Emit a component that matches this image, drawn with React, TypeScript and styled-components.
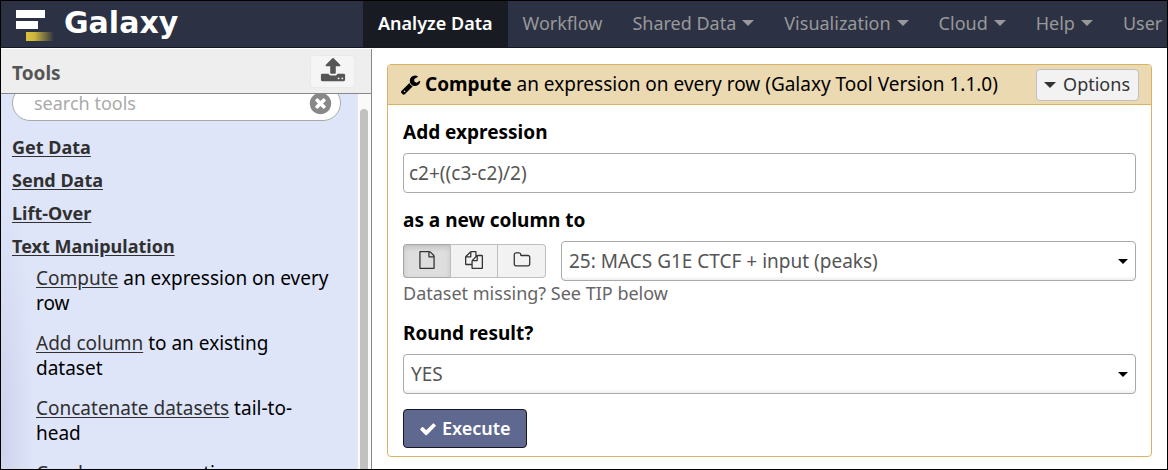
import React from "react";
import styled, { createGlobalStyle } from "styled-components";

const GlobalStyle = createGlobalStyle`
  *, *::before, *::after { box-sizing: border-box; }
  body {
    margin: 0;
    font-family: "Noto Sans", "Open Sans", sans-serif;
    font-size: 18px;
    line-height: 25px;
    color: #000;
    background: #fff;
  }
  button, input, select { font: inherit; margin: 0; }
`;

const ICONS = {
  wrench:
    "M448 1472q0-26-19-45t-45-19-45 19-19 45 19 45 45 19 45-19 19-45zm644-420l-682 682q-37 37-90 37-52 0-91-37l-106-108q-38-36-38-90 0-53 38-91l681-681q39 98 114.5 173.5t173.5 114.5zm634-435q0 39-23 106-47 134-164.5 217.5t-258.5 83.5q-185 0-316.5-131.5t-131.5-316.5 131.5-316.5 316.5-131.5q58 0 121.5 16.5t107.5 46.5q16 11 16 28t-16 28l-293 169v224l193 107q5-3 79-48.5t135.5-81 70.5-35.5q15 0 23.5 10t8.5 25z",
  check:
    "M1671 566q0 40-28 68l-724 724-136 136q-28 28-68 28t-68-28l-136-136-362-362q-28-28-28-68t28-68l136-136q28-28 68-28t68 28l294 295 656-657q28-28 68-28t68 28l136 136q28 28 28 68z",
  clear:
    "M1277 1122q0-26-19-45l-181-181 181-181q19-19 19-45 0-27-19-46l-90-90q-19-19-46-19-26 0-45 19l-181 181-181-181q-19-19-45-19-27 0-46 19l-90 90q-19 19-19 46 0 26 19 45l181 181-181 181q-19 19-19 45 0 27 19 46l90 90q19 19 46 19 26 0 45-19l181-181 181 181q19 19 45 19 27 0 46-19l90-90q19-19 19-46zm387-226q0 209-103 385.5t-279.5 279.5-385.5 103-385.5-103-279.5-279.5-103-385.5 103-385.5 279.5-279.5 385.5-103 385.5 103 279.5 279.5 103 385.5z",
  upload:
    "M1344 1472q0-26-19-45t-45-19-45 19-19 45 19 45 45 19 45-19 19-45zm256 0q0-26-19-45t-45-19-45 19-19 45 19 45 45 19 45-19 19-45zm128-224v320q0 40-28 68t-68 28h-1472q-40 0-68-28t-28-68v-320q0-40 28-68t68-28h427q21 56 70.5 92t110.5 36h256q61 0 110.5-36t70.5-92h427q40 0 68 28t28 68zm-325-648q-17 40-59 40h-256v448q0 26-19 45t-45 19h-256q-26 0-45-19t-19-45v-448h-256q-42 0-59-40-17-39 14-69l448-448q18-19 45-19t45 19l448 448q31 30 14 69z",
  file:
    "M1596 380q28 28 48 76t20 88v1152q0 40-28 68t-68 28h-1344q-40 0-68-28t-28-68v-1600q0-40 28-68t68-28h896q40 0 88 20t76 48zm-444-244v376h376q-10-29-22-41l-313-313q-12-12-41-22zm384 1528v-1024h-416q-40 0-68-28t-28-68v-416h-768v1536h1280z",
  files:
    "M1696 384q40 0 68 28t28 68v1216q0 40-28 68t-68 28h-960q-40 0-68-28t-28-68v-288h-544q-40 0-68-28t-28-68v-672q0-40 20-88t48-76l408-408q28-28 76-48t88-20h416q40 0 68 28t28 68v328q68-40 128-40h416zm-544 213l-299 299h299v-299zm-640-384l-299 299h299v-299zm196 647l316-316v-416h-384v416q0 40-28 68t-68 28h-416v640h512v-256q0-40 20-88t48-76zm956 804v-1152h-384v416q0 40-28 68t-68 28h-416v640h896z",
  folder:
    "M1600 1312v-704q0-40-28-68t-68-28h-704q-40 0-68-28t-28-68v-64q0-40-28-68t-68-28h-320q-40 0-68 28t-28 68v960q0 40 28 68t68 28h1216q40 0 68-28t28-68zm128-704v704q0 92-66 158t-158 66h-1216q-92 0-158-66t-66-158v-960q0-92 66-158t158-66h320q92 0 158 66t66 158v32h672q92 0 158 66t66 158z",
};

function Icon({ name, size }: { name: keyof typeof ICONS; size: number }) {
  return (
    <svg width={size} height={size} viewBox="0 0 1792 1792" fill="currentColor" aria-hidden="true">
      <path d={ICONS[name]} />
    </svg>
  );
}

const Page = styled.div`
  display: flex;
  flex-direction: column;
  height: 100vh;
  border: 1px solid #000;
  overflow: hidden;
`;

const Masthead = styled.header`
  display: flex;
  flex: none;
  height: 47px;
  background: #2c3143;
  border-bottom: 1px solid #151822;
  overflow: hidden;
`;

const Brand = styled.a`
  display: flex;
  flex: none;
  align-items: center;
  gap: 9px;
  width: 362px;
  padding: 0 0 2px 15px;
  color: #fff;
  font-family: "DejaVu Sans", Verdana, sans-serif;
  font-size: 30px;
  font-weight: bold;
  line-height: 44px;
  text-decoration: none;
`;

const Nav = styled.nav`
  display: flex;
  flex: none;
`;

const NavLink = styled.a<{ $active?: boolean }>`
  display: flex;
  align-items: center;
  gap: 6px;
  padding: 0 15px 2px;
  white-space: nowrap;
  text-decoration: none;
  color: ${(p) => (p.$active ? "#fff" : "#999")};
  background: ${(p) => (p.$active ? "#191b22" : "transparent")};
  font-weight: ${(p) => (p.$active ? 600 : 400)};
`;

const Caret = styled.span<{ $size?: number }>`
  flex: none;
  border: solid transparent;
  border-width: ${(p) => p.$size ?? 6}px ${(p) => p.$size ?? 6}px 0;
  border-top-color: currentColor;
`;

const Columns = styled.div`
  display: flex;
  flex: 1;
  min-height: 0;
  padding-top: 1px;
`;

const ToolPanel = styled.aside`
  display: flex;
  flex: none;
  flex-direction: column;
  width: 371px;
  border-right: 1px solid #888;
`;

const PanelHeader = styled.div`
  display: flex;
  flex: none;
  align-items: center;
  justify-content: space-between;
  height: 45px;
  padding: 0 16px 0 11px;
  background: #eee;
  border-bottom: 1px solid #888;
  color: #555;
`;

const PanelTitle = styled.h2`
  margin: 0;
  padding-top: 4px;
  font-size: 19px;
  font-weight: 700;
`;

const UploadButton = styled.button`
  display: flex;
  align-items: center;
  justify-content: center;
  width: 45px;
  height: 33px;
  padding: 0 0 2px;
  border: 1px solid #eaeaea;
  border-radius: 4px;
  background: #f5f5f5;
  color: #555;
`;

const PanelBody = styled.div`
  display: flex;
  flex: 1;
  min-height: 0;
  background:
    radial-gradient(ellipse 34px 260px at 0 90%, rgba(50, 50, 110, 0.1), transparent),
    #dfe5f9;
`;

const ToolList = styled.div`
  flex: 1;
  min-width: 0;
  padding: 0 16px 0 11px;
  overflow: hidden;
`;

const ScrollTrack = styled.div`
  flex: none;
  width: 14px;
  padding: 15px 2px 0;
  background: #fafafa;
  border-left: 1px solid #e8e8e8;
`;

const ScrollThumb = styled.div`
  width: 8px;
  height: 100%;
  border-radius: 4px 4px 0 0;
  background: #c1c1c1;
`;

const SearchBox = styled.div`
  display: flex;
  align-items: center;
  height: 36px;
  margin: -9px 0 14px;
  padding: 0 7px 0 21px;
  border: 1px solid #aaa;
  border-radius: 18px;
  background: #fff;
`;

const SearchInput = styled.input`
  flex: 1;
  min-width: 0;
  padding: 0;
  border: 0;
  outline: 0;
  background: transparent;
  &::placeholder { color: #aaa; opacity: 1; }
`;

const ClearButton = styled.button`
  display: flex;
  padding: 0;
  border: 0;
  background: none;
  color: #888;
`;

const Section = styled.section`
  margin-bottom: 8px;
`;

const SectionTitle = styled.a`
  color: #303030;
  font-weight: 700;
  text-underline-offset: 2px;
`;

const Tools = styled.ul`
  margin: 7px 0 0;
  padding: 0 8px 0 24px;
  list-style: none;
  font-size: 19px;
`;

const Tool = styled.li`
  margin-bottom: 15px;
`;

const ToolLink = styled.a`
  color: #303030;
  text-underline-offset: 2px;
`;

const Main = styled.main`
  flex: 1;
  min-width: 0;
  padding: 15px 15px 0;
`;

const Card = styled.form`
  border: 1px solid #d8b365;
  border-radius: 4px;
  font-size: 19px;
`;

const CardHeader = styled.div`
  display: flex;
  align-items: center;
  height: 40px;
  padding: 0 12px;
  background: #ebd9b2;
  border-bottom: 1px solid #d8b365;
  border-radius: 3px 3px 0 0;
`;

const CardTitle = styled.h1`
  flex: 1;
  margin: 0 0 0 4px;
  font-size: 19px;
  font-weight: 400;
  white-space: nowrap;
  b { font-weight: 700; }
`;

const OptionsButton = styled.button`
  display: flex;
  align-items: center;
  gap: 7px;
  height: 32px;
  padding: 0 8px 0 7px;
  border: 1px solid #bfbfbf;
  border-radius: 4px;
  background: #f2f2f2;
  color: #333;
  font-size: 18px;
`;

const CardBody = styled.div`
  padding: 15px 15px 8px;
`;

const Label = styled.label`
  display: block;
  margin-bottom: 8px;
  font-weight: 700;
`;

const Field = styled.div`
  margin-bottom: 15px;
`;

const TextInput = styled.input`
  display: block;
  width: 100%;
  height: 40px;
  padding: 0 5px;
  border: 1px solid #aaa;
  border-radius: 4px;
  background: #fff;
  color: #555;
`;

const SelectWrap = styled.div`
  position: relative;
  flex: 1;
  min-width: 0;
`;

const Select = styled.select`
  display: block;
  width: 100%;
  height: 40px;
  padding: 0 28px 0 7px;
  appearance: none;
  border: 1px solid #aaa;
  border-radius: 4px;
  background: linear-gradient(to top, #eee 0, #fff 4px);
  color: #555;
`;

const SelectArrow = styled.span`
  position: absolute;
  top: 0;
  right: 8px;
  bottom: 0;
  display: flex;
  align-items: center;
  pointer-events: none;
`;

const SourceRow = styled.div`
  display: flex;
  align-items: center;
  gap: 15px;
`;

const SourceGroup = styled.div`
  display: flex;
  flex: none;
`;

const SourceButton = styled.button<{ $active?: boolean }>`
  display: flex;
  align-items: center;
  justify-content: center;
  width: 48px;
  height: 34px;
  padding: 0 0 2px;
  border: 1px solid ${(p) => (p.$active ? "#a6a6a6" : "#bfbfbf")};
  background: ${(p) => (p.$active ? "#dedede" : "#f2f2f2")};
  box-shadow: ${(p) => (p.$active ? "inset 0 3px 5px rgba(0, 0, 0, 0.125)" : "none")};
  color: #333;
  &:first-child { width: 47px; border-radius: 4px 0 0 4px; border-right: 0; }
  &:last-child { border-radius: 0 4px 4px 0; border-left: 0; }
`;

const Help = styled.p`
  margin: 0 0 15px;
  color: #666;
  font-size: 18px;
`;

const ExecuteButton = styled.button`
  display: flex;
  align-items: center;
  gap: 5px;
  height: 39px;
  padding: 0 15px;
  border: 1px solid #151822;
  border-radius: 4px;
  background: #5f6990;
  color: #fff;
  font-size: 18px;
  font-weight: 600;
`;

function Logo() {
  return (
    <svg width="39" height="38" viewBox="0 0 39 38" aria-hidden="true">
      <defs>
        <linearGradient id="goldFade" x1="0" x2="1" y1="0" y2="0">
          <stop offset="0" stopColor="#d9c23c" />
          <stop offset="0.3" stopColor="#cdb73c" />
          <stop offset="1" stopColor="#2c3143" />
        </linearGradient>
      </defs>
      <rect x="0" y="6" width="29" height="8" fill="#fff" />
      <rect x="0" y="17" width="22" height="8" fill="#fff" />
      <rect x="10" y="28" width="28" height="9" fill="url(#goldFade)" />
    </svg>
  );
}

const MENU = ["Shared Data", "Visualization", "Cloud", "Help", "User"];

const TOOLS = [
  { name: "Compute", rest: "an expression on every row" },
  { name: "Add column", rest: "to an existing dataset" },
  { name: "Concatenate datasets", rest: "tail-to-head" },
  { name: "Condense", rest: "consecutive characters" },
];

export default function App() {
  return (
    <>
      <GlobalStyle />
      <Page>
        <Masthead>
          <Brand href="#">
            <Logo />
            Galaxy
          </Brand>
          <Nav>
            <NavLink href="#" $active>Analyze Data</NavLink>
            <NavLink href="#">Workflow</NavLink>
            {MENU.map((item) => (
              <NavLink href="#" key={item}>
                {item}
                <Caret />
              </NavLink>
            ))}
          </Nav>
        </Masthead>
        <Columns>
          <ToolPanel>
            <PanelHeader>
              <PanelTitle>Tools</PanelTitle>
              <UploadButton type="button" aria-label="Upload data">
                <Icon name="upload" size={26} />
              </UploadButton>
            </PanelHeader>
            <PanelBody>
              <ToolList>
                <SearchBox>
                  <SearchInput type="text" placeholder="search tools" aria-label="search tools" />
                  <ClearButton type="button" aria-label="Clear search">
                    <Icon name="clear" size={25} />
                  </ClearButton>
                </SearchBox>
                <Section><SectionTitle href="#">Get Data</SectionTitle></Section>
                <Section><SectionTitle href="#">Send Data</SectionTitle></Section>
                <Section><SectionTitle href="#">Lift-Over</SectionTitle></Section>
                <Section>
                  <SectionTitle href="#">Text Manipulation</SectionTitle>
                  <Tools>
                    {TOOLS.map((tool) => (
                      <Tool key={tool.name}>
                        <ToolLink href="#">{tool.name}</ToolLink> {tool.rest}
                      </Tool>
                    ))}
                  </Tools>
                </Section>
              </ToolList>
              <ScrollTrack>
                <ScrollThumb />
              </ScrollTrack>
            </PanelBody>
          </ToolPanel>
          <Main>
            <Card onSubmit={(e) => e.preventDefault()}>
              <CardHeader>
                <Icon name="wrench" size={21} />
                <CardTitle>
                  <b>Compute</b> an expression on every row (Galaxy Tool Version 1.1.0)
                </CardTitle>
                <OptionsButton type="button">
                  <Caret />
                  Options
                </OptionsButton>
              </CardHeader>
              <CardBody>
                <Field>
                  <Label htmlFor="expression">Add expression</Label>
                  <TextInput id="expression" type="text" defaultValue="c2+((c3-c2)/2)" />
                </Field>
                <Label htmlFor="dataset">as a new column to</Label>
                <SourceRow>
                  <SourceGroup>
                    <SourceButton type="button" $active aria-label="Single dataset">
                      <Icon name="file" size={18} />
                    </SourceButton>
                    <SourceButton type="button" aria-label="Multiple datasets">
                      <Icon name="files" size={18} />
                    </SourceButton>
                    <SourceButton type="button" aria-label="Dataset collection">
                      <Icon name="folder" size={18} />
                    </SourceButton>
                  </SourceGroup>
                  <SelectWrap>
                    <Select id="dataset">
                      <option>25: MACS G1E CTCF + input (peaks)</option>
                    </Select>
                    <SelectArrow><Caret $size={5} /></SelectArrow>
                  </SelectWrap>
                </SourceRow>
                <Help>Dataset missing? See TIP below</Help>
                <Field>
                  <Label htmlFor="round">Round result?</Label>
                  <SelectWrap>
                    <Select id="round">
                      <option>YES</option>
                      <option>NO</option>
                    </Select>
                    <SelectArrow><Caret $size={5} /></SelectArrow>
                  </SelectWrap>
                </Field>
                <ExecuteButton type="submit">
                  <Icon name="check" size={18} />
                  Execute
                </ExecuteButton>
              </CardBody>
            </Card>
          </Main>
        </Columns>
      </Page>
    </>
  );
}
